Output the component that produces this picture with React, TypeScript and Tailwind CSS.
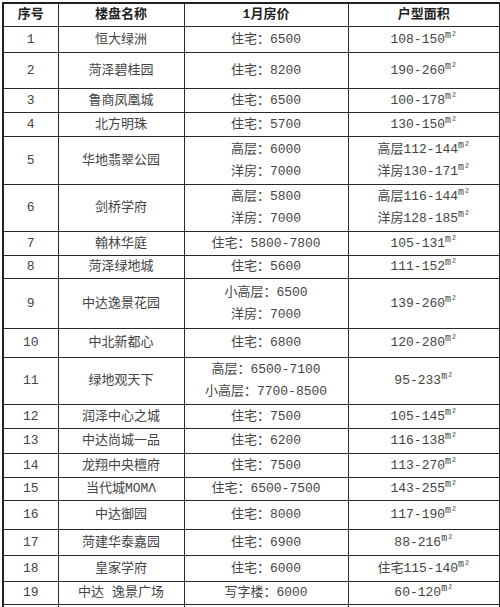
import type { ReactNode } from "react";

type Row = {
  no: string;
  name: string;
  price: string[];
  area: string[];
  h: number;
};

const rows: Row[] = [
  { no: "1", name: "恒大绿洲", price: ["住宅：6500"], area: ["108-150"], h: 26 },
  { no: "2", name: "菏泽碧桂园", price: ["住宅：8200"], area: ["190-260"], h: 36 },
  { no: "3", name: "鲁商凤凰城", price: ["住宅：6500"], area: ["100-178"], h: 24 },
  { no: "4", name: "北方明珠", price: ["住宅：5700"], area: ["130-150"], h: 24 },
  { no: "5", name: "华地翡翠公园", price: ["高层：6000", "洋房：7000"], area: ["高层112-144", "洋房130-171"], h: 48 },
  { no: "6", name: "剑桥学府", price: ["高层：5800", "洋房：7000"], area: ["高层116-144", "洋房128-185"], h: 47 },
  { no: "7", name: "翰林华庭", price: ["住宅：5800-7800"], area: ["105-131"], h: 24 },
  { no: "8", name: "菏泽绿地城", price: ["住宅：5600"], area: ["111-152"], h: 23 },
  { no: "9", name: "中达逸景花园", price: ["小高层：6500", "洋房：7000"], area: ["139-260"], h: 50 },
  { no: "10", name: "中北新都心", price: ["住宅：6800"], area: ["120-280"], h: 29 },
  { no: "11", name: "绿地观天下", price: ["高层：6500-7100", "小高层：7700-8500"], area: ["95-233"], h: 47 },
  { no: "12", name: "润泽中心之城", price: ["住宅：7500"], area: ["105-145"], h: 24 },
  { no: "13", name: "中达尚城一品", price: ["住宅：6200"], area: ["116-138"], h: 25 },
  { no: "14", name: "龙翔中央檀府", price: ["住宅：7500"], area: ["113-270"], h: 24 },
  { no: "15", name: "当代城MOMΛ", price: ["住宅：6500-7500"], area: ["143-255"], h: 23 },
  { no: "16", name: "中达御园", price: ["住宅：8000"], area: ["117-190"], h: 29 },
  { no: "17", name: "菏建华泰嘉园", price: ["住宅：6900"], area: ["88-216"], h: 26 },
  { no: "18", name: "皇家学府", price: ["住宅：6000"], area: ["住宅115-140"], h: 26 },
  { no: "19", name: "中达 逸景广场", price: ["写字楼：6000"], area: ["60-120"], h: 23 },
];

const font = { fontFamily: '"Liberation Mono", "Noto Sans CJK SC", monospace' };

function Cell({ children }: { children?: ReactNode }) {
  return (
    <td className="border border-[#2a2a2a] p-0 text-center align-middle leading-[22px]">
      {children}
    </td>
  );
}

function Sqm() {
  return <span className="relative -top-[5px] text-[10px] leading-none">m²</span>;
}

export default function App() {
  return (
    <div className="h-[607px] w-[500px] overflow-hidden bg-white pl-[2px] pt-[2px]">
      <table
        className="w-[497px] table-fixed border-collapse border-2 border-[#222] text-[13px] text-[#444]"
        style={font}
      >
        <colgroup>
          <col className="w-[55px]" />
          <col className="w-[126px]" />
          <col className="w-[164px]" />
          <col className="w-[152px]" />
        </colgroup>
        <thead>
          <tr className="h-[23px] font-bold text-[#222]">
            <Cell>序号</Cell>
            <Cell>楼盘名称</Cell>
            <Cell>1月房价</Cell>
            <Cell>户型面积</Cell>
          </tr>
        </thead>
        <tbody>
          {rows.map((r) => (
            <tr key={r.no} style={{ height: r.h }}>
              <Cell>{r.no}</Cell>
              <Cell>{r.name}</Cell>
              <Cell>
                {r.price.map((p) => (
                  <div key={p}>{p}</div>
                ))}
              </Cell>
              <Cell>
                {r.area.map((a) => (
                  <div key={a}>
                    {a}
                    <Sqm />
                  </div>
                ))}
              </Cell>
            </tr>
          ))}
          <tr className="h-[24px]">
            <Cell />
            <Cell />
            <Cell />
            <Cell />
          </tr>
        </tbody>
      </table>
    </div>
  );
}
